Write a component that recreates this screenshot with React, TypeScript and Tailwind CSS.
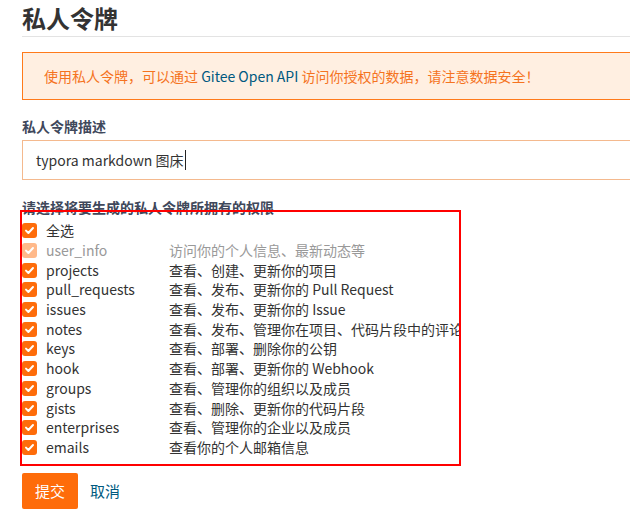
import React from "react";

interface Scope {
  name: string;
  desc: string;
  disabled?: boolean;
}

const SCOPES: Scope[] = [
  { name: "user_info",     desc: "访问你的个人信息、最新动态等", disabled: true },
  { name: "projects",      desc: "查看、创建、更新你的项目" },
  { name: "pull_requests", desc: "查看、发布、更新你的 Pull Request" },
  { name: "issues",        desc: "查看、发布、更新你的 Issue" },
  { name: "notes",         desc: "查看、发布、管理你在项目、代码片段中的评论" },
  { name: "keys",          desc: "查看、部署、删除你的公钥" },
  { name: "hook",          desc: "查看、部署、更新你的 Webhook" },
  { name: "groups",        desc: "查看、管理你的组织以及成员" },
  { name: "gists",         desc: "查看、删除、更新你的代码片段" },
  { name: "enterprises",   desc: "查看、管理你的企业以及成员" },
  { name: "emails",        desc: "查看你的个人邮箱信息" },
];

function Check({ disabled }: { disabled?: boolean }) {
  return (
    <span
      className={
        disabled
          ? "flex h-[15px] w-[15px] shrink-0 items-center justify-center rounded-[3px] bg-[#ffb98a]"
          : "flex h-[15px] w-[15px] shrink-0 items-center justify-center rounded-[3px] bg-[#fe6c0a]"
      }
    >
      <svg width="11" height="11" viewBox="0 0 11 11" fill="none">
        <path
          d="M2 5.6 L4.4 8 L9 3"
          stroke="#fff"
          strokeWidth="2"
          strokeLinecap="round"
          strokeLinejoin="round"
        />
      </svg>
    </span>
  );
}

export default function App() {
  return (
    <div
      className="h-[520px] w-[630px] overflow-hidden bg-white text-[#333]"
      style={{ fontFamily: '"Noto Sans CJK SC", "Noto Sans", sans-serif' }}
    >
      <div className="w-[720px] pl-[22px]">
        {/* Title */}
        <h1 className="border-b border-[#e3e3e3] text-[24px] font-bold leading-[36px] text-[#333]">
          私人令牌
        </h1>

        {/* Warning */}
        <div className="mt-[15px] flex h-[48px] items-center border border-[#ff7a1a] bg-[#ffefe1] pl-[21px] text-[14px] text-[#f5731e]">
          <span>
            使用私人令牌，可以通过 <span className="text-[#005980]">Gitee Open API</span> 访问你授权的数据，请注意数据安全！
          </span>
        </div>

        {/* Description */}
        <p className="mt-[16px] text-[14px] font-bold leading-[20px] text-[#40485b]">私人令牌描述</p>
        <div className="mt-[4px] flex h-[40px] items-center border border-[#f4b98e] pl-[13px] text-[14px] text-[#333]">
          <span>typora markdown 图床</span>
          <span className="ml-[1px] h-[20px] w-px bg-[#222]" />
        </div>

        {/* Scopes */}
        <p className="mt-[17px] text-[14px] font-bold leading-[20px] text-[#40485b]">
          请选择将要生成的私人令牌所拥有的权限
        </p>
        <div className="relative -ml-[2px] -mt-[7px] w-[441px] overflow-hidden border-2 border-[#ff0000] pb-[7px] pt-[9px]">
          <label className="flex h-[19.7px] items-center whitespace-nowrap text-[14px]">
            <Check />
            <span className="ml-[9px] text-[#333]">全选</span>
          </label>
          {SCOPES.map((s) => (
            <label key={s.name} className="flex h-[19.7px] items-center whitespace-nowrap text-[14px]">
              <Check disabled={s.disabled} />
              <span
                className={
                  s.disabled
                    ? "ml-[9px] w-[123px] shrink-0 text-[#999]"
                    : "ml-[9px] w-[123px] shrink-0 text-[#333]"
                }
              >
                {s.name}
              </span>
              <span className={s.disabled ? "shrink-0 text-[#999]" : "shrink-0 text-[#333]"}>{s.desc}</span>
            </label>
          ))}
        </div>

        {/* Actions */}
        <div className="mt-[7px] flex items-center">
          <button className="h-[36px] w-[56px] rounded-[2px] bg-[#fe6c0a] text-[15px] text-white">提交</button>
          <a className="ml-[12px] text-[15px] text-[#005980]">取消</a>
        </div>
      </div>
    </div>
  );
}
